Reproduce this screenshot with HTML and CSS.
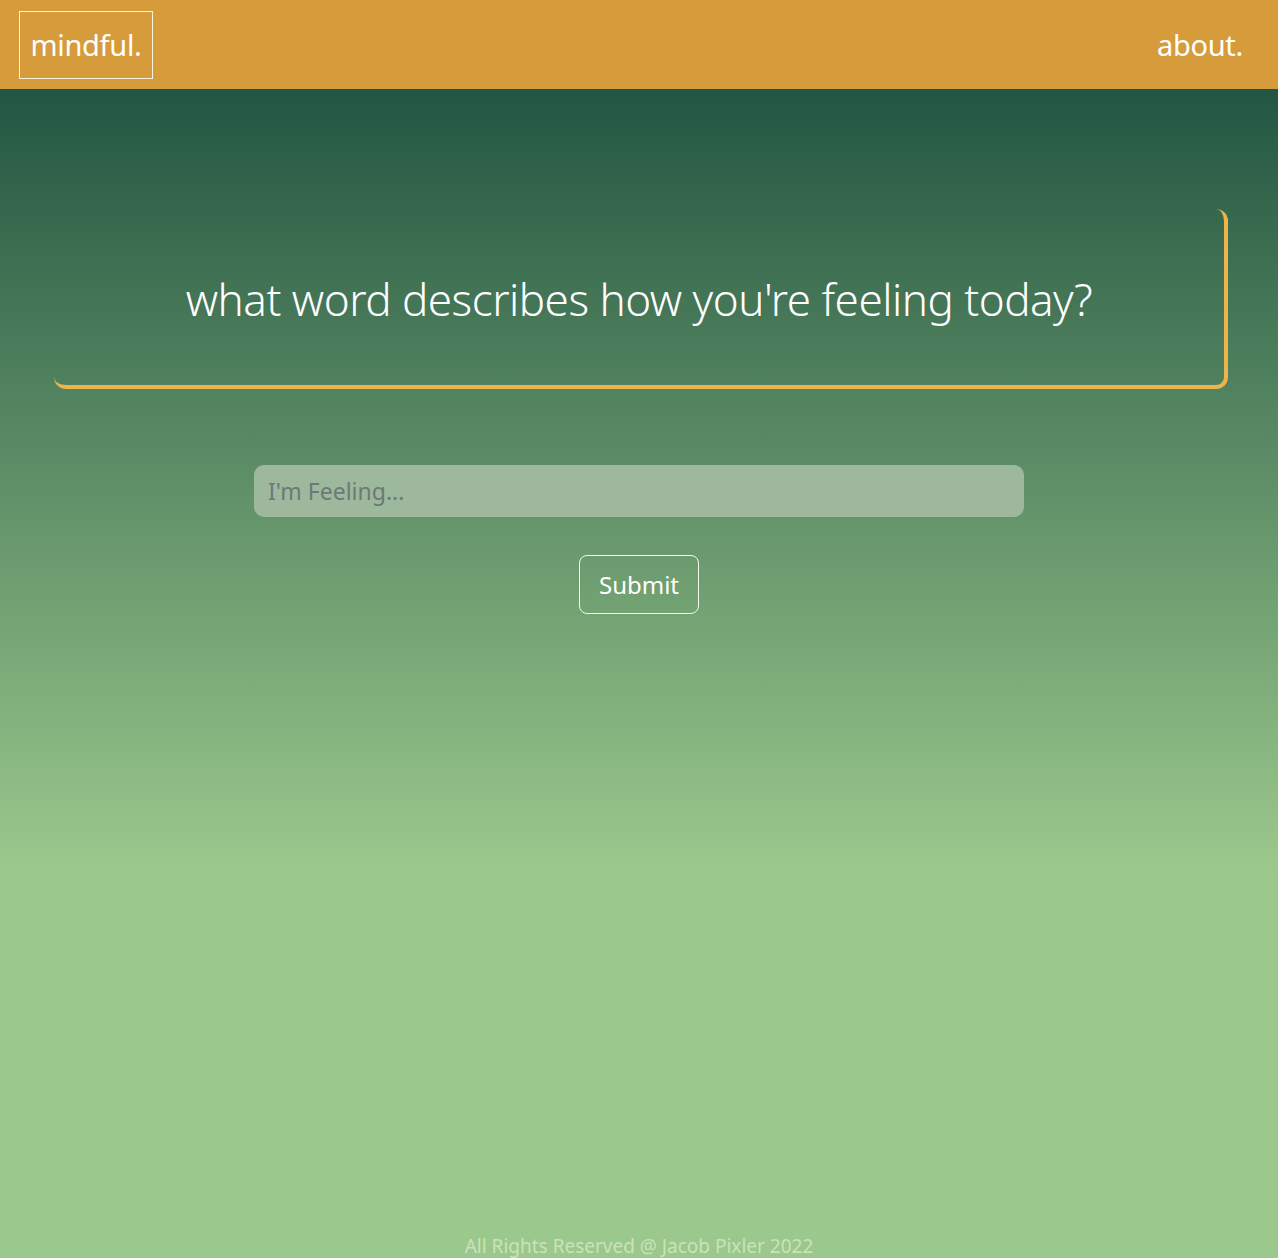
FILE: index.html
```html
<!DOCTYPE html>
<html lang="en">
<head>
<meta charset="utf-8">
<title>mindful.</title>
<link rel="stylesheet" href="styles.css">
</head>
<body>
<header class="topbar">
  <a class="logo" href="#">mindful.</a>
  <a class="nav-link" href="#">about.</a>
</header>
<main class="page">
  <section class="prompt">
    <h1 class="prompt-title">what word describes how you're feeling today?</h1>
  </section>
  <form class="feeling-form">
    <input class="feeling-input" type="text" placeholder="I'm Feeling...">
    <button class="submit-btn" type="button">Submit</button>
  </form>
</main>
<footer class="footer">All Rights Reserved @ Jacob Pixler 2022</footer>
</body>
</html>
```
FILE: styles.css
```css
html, body {
  margin: 0;
  padding: 0;
}
body {
  background: #9bc88c;
  font-family: "Noto Sans", "Open Sans", sans-serif;
  color: #fff;
}
.topbar {
  height: 89px;
  box-sizing: border-box;
  background: #d69c3c;
  display: flex;
  align-items: center;
  justify-content: space-between;
  padding: 0 35px 0 19px;
}
.logo {
  display: flex;
  align-items: center;
  justify-content: center;
  width: 134px;
  height: 68px;
  box-sizing: border-box;
  border: 1px solid #fbf3dc;
  color: #fff;
  text-decoration: none;
  font-size: 29px;
  font-weight: 400;
  letter-spacing: -0.3px;
}
.nav-link {
  color: #fff;
  text-decoration: none;
  font-size: 29px;
  letter-spacing: -0.3px;
}
.page {
  min-height: 1144px;
  background: linear-gradient(to bottom, #235642 0px, #9bc88c 780px, #9bc88c 100%);
  display: flex;
  flex-direction: column;
  align-items: center;
  padding-top: 120px;
  box-sizing: border-box;
}
.prompt {
  align-self: stretch;
  margin: 0 50px 0 54px;
  height: 180px;
  box-sizing: border-box;
  border-right: 4px solid #ecb44b;
  border-bottom: 4px solid #ecb44b;
  border-radius: 12px;
  display: flex;
  align-items: center;
  justify-content: center;
  padding-top: 4px;
}
.prompt-title {
  margin: 0;
  font-weight: 300;
  font-size: 44px;
  letter-spacing: -0.5px;
  color: #fff;
}
.feeling-form {
  display: flex;
  flex-direction: column;
  align-items: center;
  margin-top: 76px;
}
.feeling-input {
  width: 770px;
  height: 52px;
  box-sizing: border-box;
  border: none;
  border-radius: 10px;
  background: #9db89c;
  padding: 0 14px;
  font-family: inherit;
  font-size: 23px;
  color: #333;
  outline: none;
}
.feeling-input::placeholder {
  color: #6b7a76;
}
.submit-btn {
  margin-top: 38px;
  width: 120px;
  height: 59px;
  background: transparent;
  border: 1px solid #f4f8ef;
  border-radius: 8px;
  color: #fff;
  font-family: inherit;
  font-size: 24px;
  cursor: pointer;
}
.footer {
  text-align: center;
  font-size: 19px;
  line-height: 25px;
  color: #cae3ba;
  background: #9bc88c;
  height: 25px;
  padding-top: 1px;
}
```
